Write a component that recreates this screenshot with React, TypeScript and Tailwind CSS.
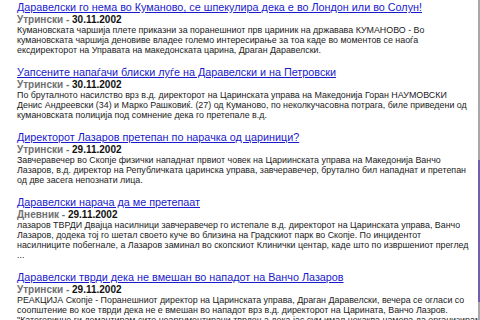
import React from 'react'

type Item = {
  title: string
  source: string
  date: string
  lines: string[]
}

const items: Item[] = [
  {
    title: 'Даравелски го нема во Куманово, се шпекулира дека е во Лондон или во Солун!',
    source: 'Утрински',
    date: '30.11.2002',
    lines: [
      'Кумановската чаршија плете приказни за поранешниот прв цариник на државава КУМАНОВО - Во',
      'кумановската чаршија деновиве владее големо интересирање за тоа каде во моментов се наоѓа',
      'ексдиректорот на Управата на македонската царина, Драган Даравелски.',
    ],
  },
  {
    title: 'Уапсените напаѓачи блиски луѓе на Даравелски и на Петровски',
    source: 'Утрински',
    date: '30.11.2002',
    lines: [
      'По бруталното насилство врз в.д. директорот на Царинската управа на Македонија Горан НАУМОВСКИ',
      'Денис Андреевски (34) и Марко Рашковиќ. (27) од Куманово, по неколкучасовна потрага, биле приведени од',
      'кумановската полиција под сомнение дека го претепале в.д.',
    ],
  },
  {
    title: 'Директорот Лазаров претепан по нарачка од цариници?',
    source: 'Утрински',
    date: '29.11.2002',
    lines: [
      'Завчеравечер во Скопје физички нападнат првиот човек на Цариинската управа на Македонија Ванчо',
      'Лазаров, в.д. директор на Републичката царинска управа, завчеравечер, брутално бил нападнат и претепан',
      'од две засега непознати лица.',
    ],
  },
  {
    title: 'Даравелски нарача да ме претепаат',
    source: 'Дневник',
    date: '29.11.2002',
    lines: [
      'лазаров ТВРДИ Двајца насилници завчеравечер го истепале в.д. директорот на Царинската управа, Ванчо',
      'Лазаров, додека тој го шетал своето куче во близина на Градскиот парк во Скопје. По инцидентот',
      'насилниците побегнале, а Лазаров заминал во скопскиот Клинички центар, каде што по извршениот преглед',
      '...',
    ],
  },
  {
    title: 'Даравелски тврди дека не вмешан во нападот на Ванчо Лазаров',
    source: 'Утрински',
    date: '29.11.2002',
    lines: [
      'РЕАКЦИЈА Скопје - Поранешниот директор на Царинската управа, Драган Даравелски, вечера се огласи со',
      'соопштение во кое тврди дека не е вмешан во нападот врз в.д. директорот на Царината, Ванчо Лазров.',
      '"Категорично ги демантирам сите неаргументирани тврдења дека јас сум имал некаква намера да организирам',
    ],
  },
]

const NewsItem: React.FC<{ item: Item }> = ({ item }) => (
  <div className="mb-[10px]">
    <a
      href="#"
      className="block whitespace-nowrap text-[10.8px] leading-[14px] text-[#1a1acc] underline underline-offset-[1px]"
    >
      {item.title}
    </a>
    <div className="whitespace-nowrap text-[10px] leading-[11px] font-bold">
      <span className="text-[#707070]">{item.source} - </span>
      <span className="text-[#111]">{item.date}</span>
    </div>
    {item.lines.map((line, i) => (
      <div key={i} className="whitespace-nowrap text-[8.9px] leading-[10px] text-[#222]">
        {line}
      </div>
    ))}
  </div>
)

export default function App() {
  return (
    <div className="flex h-[320px] w-[480px] overflow-hidden bg-white font-['Liberation_Sans',Arial,sans-serif]">
      <div className="flex-1 overflow-hidden pl-[17px]">
        {items.map((item, i) => (
          <NewsItem key={i} item={item} />
        ))}
      </div>
      {/* thin right edge, partly highlighted */}
      <div className="flex w-[2px] flex-col">
        <div className="h-[160px] bg-[#a8a8a8]" />
        <div className="h-[142px] bg-[#6f5fae]" />
        <div className="flex-1 bg-[#a8a8a8]" />
      </div>
    </div>
  )
}
